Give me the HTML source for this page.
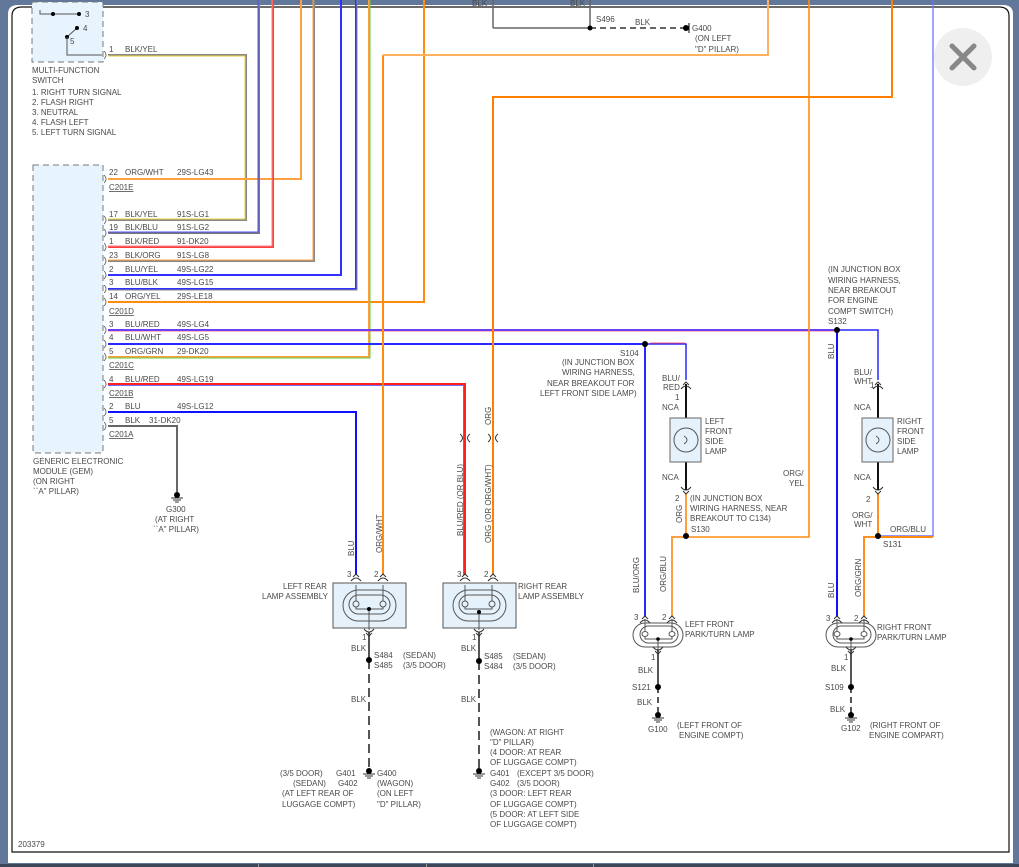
<!DOCTYPE html>
<html><head><meta charset="utf-8"><style>
html,body{margin:0;padding:0;width:1019px;height:867px;overflow:hidden;background:#61789a;}
svg{position:absolute;left:0;top:0}
text{font-family:"Liberation Sans",sans-serif;font-size:8px;fill:#4a4a4a}
</style></head><body>
<svg width="1019" height="867" viewBox="0 0 1019 867">
<defs>
<g id="cup"><path d="M-5,3 Q0,-3 5,3" fill="none" stroke="#333" stroke-width="1"/><path d="M-3,-1 L0,-4 L3,-1" fill="none" stroke="#333" stroke-width="1"/></g>
<g id="cupd"><path d="M-5,-3 Q0,3 5,-3" fill="none" stroke="#333" stroke-width="1"/><path d="M-3,1 L0,4 L3,1" fill="none" stroke="#333" stroke-width="1"/></g>
<g id="cr"><path d="M-2,-4 Q2,0 -2,4" fill="none" stroke="#555" stroke-width="0.8"/></g>
<g id="gnd"><circle cx="0" cy="0" r="3" fill="#000"/><line x1="-6" y1="3" x2="6" y2="3" stroke="#333"/><line x1="-4" y1="5" x2="4" y2="5" stroke="#333"/><line x1="-2" y1="7" x2="2" y2="7" stroke="#333"/></g>
</defs>
<path d="M8,863 L8,14 Q8,5 18,5 L1003,5 Q1013,5 1013,14 L1013,863 Z" fill="#fff"/>
<path d="M12,852 L12,16 Q12,7 22,7 L999,7 Q1009,7 1009,16 L1009,852 Z" fill="#fff" stroke="#111" stroke-width="1.2"/>
<rect x="0" y="864" width="1019" height="3" fill="#3b4758"/>
<rect x="258" y="864" width="1" height="3" fill="#999"/><rect x="426" y="864" width="1" height="3" fill="#999"/><rect x="593" y="864" width="1" height="3" fill="#999"/>

<rect x="32" y="2" width="71" height="60" fill="#e8f4fd" stroke="#777" stroke-dasharray="6,4"/>
<path d="M40,10 L40,14 L78,14" fill="none" stroke="#555"/><circle cx="53" cy="14" r="2" fill="#000"/><circle cx="79" cy="14" r="2" fill="#000"/>
<text x="85" y="17">3</text>
<line x1="67" y1="37" x2="77" y2="28" stroke="#555"/><circle cx="77" cy="28" r="2" fill="#000"/><circle cx="67" cy="37" r="2" fill="#000"/>
<text x="83" y="31">4</text><text x="70" y="44">5</text>
<path d="M67,37 L67,55 L102,55" fill="none" stroke="#555"/>
<use href="#cr" x="106" y="55"/>
<text x="109" y="52">1</text><text x="125" y="52">BLK/YEL</text>
<text x="32" y="73">MULTI-FUNCTION</text><text x="32" y="83">SWITCH</text>
<text x="32" y="95">1. RIGHT TURN SIGNAL</text><text x="32" y="105">2. FLASH RIGHT</text><text x="32" y="115">3. NEUTRAL</text><text x="32" y="125">4. FLASH LEFT</text><text x="32" y="135">5. LEFT TURN SIGNAL</text>

<rect x="33" y="165" width="70" height="288" fill="#e8f4fd" stroke="#777" stroke-dasharray="6,4"/>
<text x="33" y="464">GENERIC ELECTRONIC</text><text x="33" y="474">MODULE (GEM)</text><text x="33" y="484">(ON RIGHT</text><text x="33" y="494">``A" PILLAR)</text>

<g fill="none" stroke-width="2">
<path d="M108,55 L246,55 L246,220 L108,220" stroke="#888"/><path d="M108,56 L245,56 L245,219 L108,219" stroke="#e8d040" stroke-width="1"/>
<path d="M108,179 L301,179 L301,0" stroke="#ffa040"/>
<path d="M108,233 L259,233 L259,0" stroke="#777"/><path d="M108,232 L258,232 L258,0" stroke="#5050ff" stroke-width="1"/>
<path d="M108,247 L273,247 L273,0" stroke="#ff4040"/><path d="M108,246 L272,246 L272,0" stroke="#ff8080" stroke-width="1"/>
<path d="M108,261 L314,261 L314,0" stroke="#888"/><path d="M108,260 L313,260 L313,0" stroke="#ffa040" stroke-width="1"/>
<path d="M108,275 L341,275 L341,0" stroke="#3030ff"/>
<path d="M108,289 L356,289 L356,0" stroke="#3030ff"/><path d="M108,290 L357,290 L357,0" stroke="#888" stroke-width="1"/>
<path d="M108,302 L424,302 L424,0" stroke="#ff8c10"/>
<path d="M108,357 L369,357 L369,0" stroke="#ffa040"/><path d="M108,358 L370,358 L370,0" stroke="#60d040" stroke-width="1"/>
<path d="M108,330 L837,330" stroke="#6a40f0"/><path d="M108,331.5 L837,331.5" stroke="#ff7090" stroke-width="0.6"/>
<path d="M108,344 L645,344" stroke="#2828ff"/>
<path d="M108,384 L465,384 L465,575" stroke="#ff2020"/><path d="M108,385.5 L463.5,385.5 L463.5,575" stroke="#4040ff" stroke-width="0.8"/>
<path d="M108,412 L356,412 L356,575" stroke="#1010ff"/>
<path d="M108,426 L177,426 L177,492" stroke="#666"/>
<path d="M383,55 L383,575" stroke="#ff8c10"/>
<path d="M383,55 L768,55 L768,0" stroke="#ffb060"/>
<path d="M493,575 L493,97 L892,97 L892,0" stroke="#ff8000"/>
<path d="M809,0 L809,537 L686,537" stroke="#ff8c10" stroke-width="1.6"/>
<path d="M933,0 L933,537" stroke="#7070ff" stroke-width="1.3"/>
<path d="M878,537 L933,537" stroke="#ff8c10"/><path d="M880,535.5 L933,535.5" stroke="#7070ff" stroke-width="0.8"/>
<path d="M645,344 L645,617" stroke="#2828ff"/>
<path d="M648,344 L686,344 L686,380" stroke="#2828ff" stroke-width="1.5"/><path d="M650,343 L685,343" stroke="#ff3050" stroke-width="0.8"/>
<path d="M686,384 L686,490" stroke="#111"/>
<path d="M686,494 L686,537 L672,537 L672,617" stroke="#ffa040"/>
<path d="M837,330 L878,330 L878,380" stroke="#2828ff" stroke-width="1.5"/>
<path d="M837,330 L837,617" stroke="#1010ff"/>
<path d="M878,384 L878,490" stroke="#111"/>
<path d="M878,494 L878,537 L864,537 L864,617" stroke="#ff9020"/>
<path d="M493,28 L493,0 M493,28 L590,28 L590,0" stroke="#666" stroke-width="1.5"/>
<path d="M590,28 L684,28" stroke="#333" stroke-dasharray="6,4" stroke-width="1.5"/>
<path d="M369,632 L369,660" stroke="#555"/><path d="M369,660 L369,768" stroke="#555" stroke-dasharray="9,5"/>
<path d="M479,632 L479,661" stroke="#555"/><path d="M479,661 L479,768" stroke="#555" stroke-dasharray="9,5"/>
<path d="M658,650 L658,687" stroke="#555"/><path d="M658,687 L658,713" stroke="#555" stroke-dasharray="6,4"/>
<path d="M851,650 L851,687" stroke="#555"/><path d="M851,687 L851,713" stroke="#555" stroke-dasharray="6,4"/>
</g>
<circle cx="590" cy="28" r="2.5"/><circle cx="686" cy="28" r="3"/><line x1="689" y1="23" x2="689" y2="33" stroke="#000"/>
<text x="596" y="22">S496</text><text x="635" y="25">BLK</text><text x="692" y="31">G400</text><text x="695" y="41">(ON LEFT</text><text x="695" y="52">"D" PILLAR)</text>
<text x="472" y="6">BLK</text><text x="570" y="6">BLK</text>

<g>
<use href="#cr" x="106" y="179"/><use href="#cr" x="106" y="220"/><use href="#cr" x="106" y="233"/><use href="#cr" x="106" y="247"/><use href="#cr" x="106" y="261"/><use href="#cr" x="106" y="275"/><use href="#cr" x="106" y="289"/><use href="#cr" x="106" y="302"/><use href="#cr" x="106" y="330"/><use href="#cr" x="106" y="344"/><use href="#cr" x="106" y="357"/><use href="#cr" x="106" y="384"/><use href="#cr" x="106" y="412"/><use href="#cr" x="106" y="426"/>
<text x="109" y="175">22</text><text x="125" y="175">ORG/WHT</text><text x="177" y="175">29S-LG43</text><text x="109" y="190" text-decoration="underline">C201E</text>
<text x="109" y="217">17</text><text x="125" y="217">BLK/YEL</text><text x="177" y="217">91S-LG1</text>
<text x="109" y="230">19</text><text x="125" y="230">BLK/BLU</text><text x="177" y="230">91S-LG2</text>
<text x="109" y="244">1</text><text x="125" y="244">BLK/RED</text><text x="177" y="244">91-DK20</text>
<text x="109" y="258">23</text><text x="125" y="258">BLK/ORG</text><text x="177" y="258">91S-LG8</text>
<text x="109" y="272">2</text><text x="125" y="272">BLU/YEL</text><text x="177" y="272">49S-LG22</text>
<text x="109" y="285">3</text><text x="125" y="285">BLU/BLK</text><text x="177" y="285">49S-LG15</text>
<text x="109" y="299">14</text><text x="125" y="299">ORG/YEL</text><text x="177" y="299">29S-LE18</text><text x="109" y="314" text-decoration="underline">C201D</text>
<text x="109" y="327">3</text><text x="125" y="327">BLU/RED</text><text x="177" y="327">49S-LG4</text>
<text x="109" y="340">4</text><text x="125" y="340">BLU/WHT</text><text x="177" y="340">49S-LG5</text>
<text x="109" y="354">5</text><text x="125" y="354">ORG/GRN</text><text x="177" y="354">29-DK20</text><text x="109" y="368" text-decoration="underline">C201C</text>
<text x="109" y="382">4</text><text x="125" y="382">BLU/RED</text><text x="177" y="382">49S-LG19</text><text x="109" y="396" text-decoration="underline">C201B</text>
<text x="109" y="409">2</text><text x="125" y="409">BLU</text><text x="177" y="409">49S-LG12</text>
<text x="109" y="423">5</text><text x="125" y="423">BLK</text><text x="149" y="423">31-DK20</text><text x="109" y="437" text-decoration="underline">C201A</text>
</g>
<use href="#gnd" x="177" y="495"/>
<text x="166" y="512">G300</text><text x="155" y="522">(AT RIGHT</text><text x="153" y="532">``A" PILLAR)</text>

<path d="M460,434 Q465,438 460,442 M470,434 Q465,438 470,442 M488,434 Q493,438 488,442 M498,434 Q493,438 498,442" fill="none" stroke="#333"/>
<text transform="translate(491,425) rotate(-90)">ORG</text>
<text transform="translate(354,556) rotate(-90)">BLU</text>
<text transform="translate(382,553) rotate(-90)">ORG/WHT</text>
<text transform="translate(463,536) rotate(-90)">BLU/RED (OR BLU)</text>
<text transform="translate(491,543) rotate(-90)">ORG (OR ORG/WHT)</text>

<g fill="none" stroke="#555">
<rect x="333" y="583" width="73" height="45" fill="#e6f2fb"/>
<rect x="343" y="590" width="53" height="31" rx="15.5"/><rect x="349" y="595" width="41" height="19" rx="9.5"/>
<ellipse cx="356" cy="604" rx="3" ry="3"/><ellipse cx="383" cy="604" rx="3" ry="3"/>
<path d="M356,601 L356,585 M383,601 L383,585 M356,607 L356,609 L383,609 L383,607 M369,609 L369,630"/>
<rect x="443" y="583" width="73" height="45" fill="#e6f2fb"/>
<rect x="453" y="590" width="53" height="31" rx="15.5"/><rect x="459" y="595" width="41" height="19" rx="9.5"/>
<ellipse cx="465" cy="604" rx="3" ry="3"/><ellipse cx="492" cy="604" rx="3" ry="3"/>
<path d="M465,601 L465,585 M492,601 L492,585 M465,607 L465,609 L492,609 L492,607 M479,612 L479,630"/>
</g>
<circle cx="369" cy="609" r="2"/><circle cx="479" cy="612" r="2"/>
<use href="#cup" x="356" y="578"/><use href="#cup" x="383" y="578"/><use href="#cupd" x="369" y="632"/>
<use href="#cup" x="465" y="578"/><use href="#cup" x="493" y="578"/><use href="#cupd" x="479" y="632"/>
<text x="347" y="577">3</text><text x="374" y="577">2</text><text x="457" y="577">3</text><text x="484" y="577">2</text>
<text x="283" y="589">LEFT REAR</text><text x="262" y="599">LAMP ASSEMBLY</text>
<text x="518" y="589">RIGHT REAR</text><text x="518" y="599">LAMP ASSEMBLY</text>
<text x="362" y="640">1</text><text x="351" y="651">BLK</text><circle cx="369" cy="660" r="3"/>
<text x="374" y="658">S484</text><text x="403" y="658">(SEDAN)</text><text x="374" y="668">S485</text><text x="403" y="668">(3/5 DOOR)</text>
<text x="351" y="702">BLK</text><use href="#gnd" x="369" y="771"/>
<text x="280" y="776">(3/5 DOOR)</text><text x="336" y="776">G401</text><text x="377" y="776">G400</text>
<text x="293" y="786">(SEDAN)</text><text x="338" y="786">G402</text><text x="377" y="786">(WAGON)</text>
<text x="282" y="796">(AT LEFT REAR OF</text><text x="377" y="796">(ON LEFT</text>
<text x="282" y="807">LUGGAGE COMPT)</text><text x="377" y="807">"D" PILLAR)</text>
<text x="472" y="640">1</text><text x="461" y="651">BLK</text><circle cx="479" cy="661" r="3"/>
<text x="484" y="659">S485</text><text x="513" y="659">(SEDAN)</text><text x="484" y="669">S484</text><text x="513" y="669">(3/5 DOOR)</text>
<text x="461" y="702">BLK</text><use href="#gnd" x="479" y="771"/>
<text x="490" y="735">(WAGON: AT RIGHT</text><text x="490" y="745">"D" PILLAR)</text><text x="490" y="755">(4 DOOR: AT REAR</text><text x="490" y="765">OF LUGGAGE COMPT)</text>
<text x="490" y="776">G401</text><text x="517" y="776">(EXCEPT 3/5 DOOR)</text><text x="490" y="786">G402</text><text x="517" y="786">(3/5 DOOR)</text>
<text x="490" y="796">(3 DOOR: LEFT REAR</text><text x="490" y="807">OF LUGGAGE COMPT)</text><text x="490" y="817">(5 DOOR: AT LEFT SIDE</text><text x="490" y="827">OF LUGGAGE COMPT)</text>
<text x="18" y="847">203379</text>

<circle cx="645" cy="344" r="3"/><circle cx="837" cy="330" r="3"/>
<text x="620" y="356">S104</text>
<text x="562" y="365">(IN JUNCTION BOX</text><text x="562" y="375">WIRING HARNESS,</text><text x="547" y="386">NEAR BREAKOUT FOR</text><text x="540" y="396">LEFT FRONT SIDE LAMP)</text>
<text x="662" y="381">BLU/</text><text x="663" y="390">RED</text>
<text x="675" y="400">1</text><text x="662" y="410">NCA</text>
<use href="#cup" x="686" y="386"/>
<rect x="670" y="418" width="31" height="44" fill="#e6f2fb" stroke="#666"/><circle cx="686" cy="440" r="12" fill="none" stroke="#555"/><path d="M684,436 Q690,440 684,444" fill="none" stroke="#555"/>
<text x="705" y="424">LEFT</text><text x="705" y="434">FRONT</text><text x="705" y="444">SIDE</text><text x="705" y="454">LAMP</text>
<text x="662" y="480">NCA</text><use href="#cupd" x="686" y="490"/>
<text x="675" y="501">2</text><text x="690" y="501">(IN JUNCTION BOX</text><text x="690" y="511">WIRING HARNESS, NEAR</text><text x="690" y="521">BREAKOUT TO C134)</text>
<text transform="translate(682,523) rotate(-90)">ORG</text>
<circle cx="686" cy="536" r="3"/><text x="691" y="532">S130</text>
<text x="783" y="476">ORG/</text><text x="789" y="486">YEL</text>
<text transform="translate(639,593) rotate(-90)">BLU/ORG</text><text transform="translate(666,592) rotate(-90)">ORG/BLU</text>

<text x="828" y="272">(IN JUNCTION BOX</text><text x="828" y="283">WIRING HARNESS,</text><text x="828" y="293">NEAR BREAKOUT</text><text x="828" y="303">FOR ENGINE</text><text x="828" y="314">COMPT SWITCH)</text><text x="828" y="324">S132</text>
<text transform="translate(834,359) rotate(-90)">BLU</text>
<text x="854" y="375">BLU/</text><text x="854" y="384">WHT</text><text x="870" y="388">1</text>
<text x="854" y="410">NCA</text><use href="#cup" x="878" y="386"/>
<rect x="862" y="418" width="31" height="44" fill="#e6f2fb" stroke="#666"/><circle cx="878" cy="440" r="12" fill="none" stroke="#555"/><path d="M876,436 Q882,440 876,444" fill="none" stroke="#555"/>
<text x="897" y="424">RIGHT</text><text x="897" y="434">FRONT</text><text x="897" y="444">SIDE</text><text x="897" y="454">LAMP</text>
<text x="854" y="480">NCA</text><use href="#cupd" x="878" y="490"/>
<text x="866" y="502">2</text><text x="852" y="518">ORG/</text><text x="854" y="527">WHT</text>
<circle cx="878" cy="536" r="3"/><text x="883" y="547">S131</text><text x="890" y="532">ORG/BLU</text>
<text transform="translate(834,598) rotate(-90)">BLU</text><text transform="translate(861,597) rotate(-90)">ORG/GRN</text>

<g fill="none" stroke="#555">
<rect x="633" y="623" width="50" height="24" rx="12"/><rect x="640" y="626" width="38" height="17" rx="8.5"/>
<ellipse cx="645" cy="634" rx="3" ry="2.5"/><ellipse cx="672" cy="634" rx="3" ry="2.5"/>
<path d="M645,631 L645,619 M672,631 L672,619 M645,637 L645,639 L672,639 L672,637 M658,639 L658,652"/>
<rect x="826" y="623" width="50" height="24" rx="12"/><rect x="833" y="626" width="38" height="17" rx="8.5"/>
<ellipse cx="837" cy="634" rx="3" ry="2.5"/><ellipse cx="864" cy="634" rx="3" ry="2.5"/>
<path d="M837,631 L837,619 M864,631 L864,619 M837,637 L837,639 L864,639 L864,637 M851,639 L851,652"/>
</g>
<circle cx="658" cy="639" r="1.8"/><circle cx="851" cy="639" r="1.8"/>
<use href="#cup" x="645" y="620"/><use href="#cup" x="672" y="620"/><use href="#cupd" x="658" y="650"/>
<use href="#cup" x="837" y="620"/><use href="#cup" x="864" y="620"/><use href="#cupd" x="851" y="650"/>
<text x="634" y="620">3</text><text x="662" y="620">2</text><text x="826" y="621">3</text><text x="854" y="621">2</text>
<text x="685" y="627">LEFT FRONT</text><text x="685" y="637">PARK/TURN LAMP</text>
<text x="877" y="630">RIGHT FRONT</text><text x="877" y="640">PARK/TURN LAMP</text>
<text x="651" y="660">1</text><text x="638" y="673">BLK</text><circle cx="658" cy="687" r="3"/><text x="632" y="690">S121</text><text x="637" y="705">BLK</text>
<use href="#gnd" x="658" y="715"/><text x="648" y="732">G100</text><text x="677" y="728">(LEFT FRONT OF</text><text x="679" y="738">ENGINE COMPT)</text>
<text x="844" y="660">1</text><text x="831" y="671">BLK</text><circle cx="851" cy="687" r="3"/><text x="825" y="690">S109</text><text x="830" y="712">BLK</text>
<use href="#gnd" x="851" y="715"/><text x="841" y="731">G102</text><text x="870" y="728">(RIGHT FRONT OF</text><text x="869" y="738">ENGINE COMPART)</text>

<circle cx="963" cy="57" r="29" fill="#efefef"/>
<path d="M952,46 L974,68 M974,46 L952,68" stroke="#888" stroke-width="5" stroke-linecap="round"/>
</svg>
</body></html>
